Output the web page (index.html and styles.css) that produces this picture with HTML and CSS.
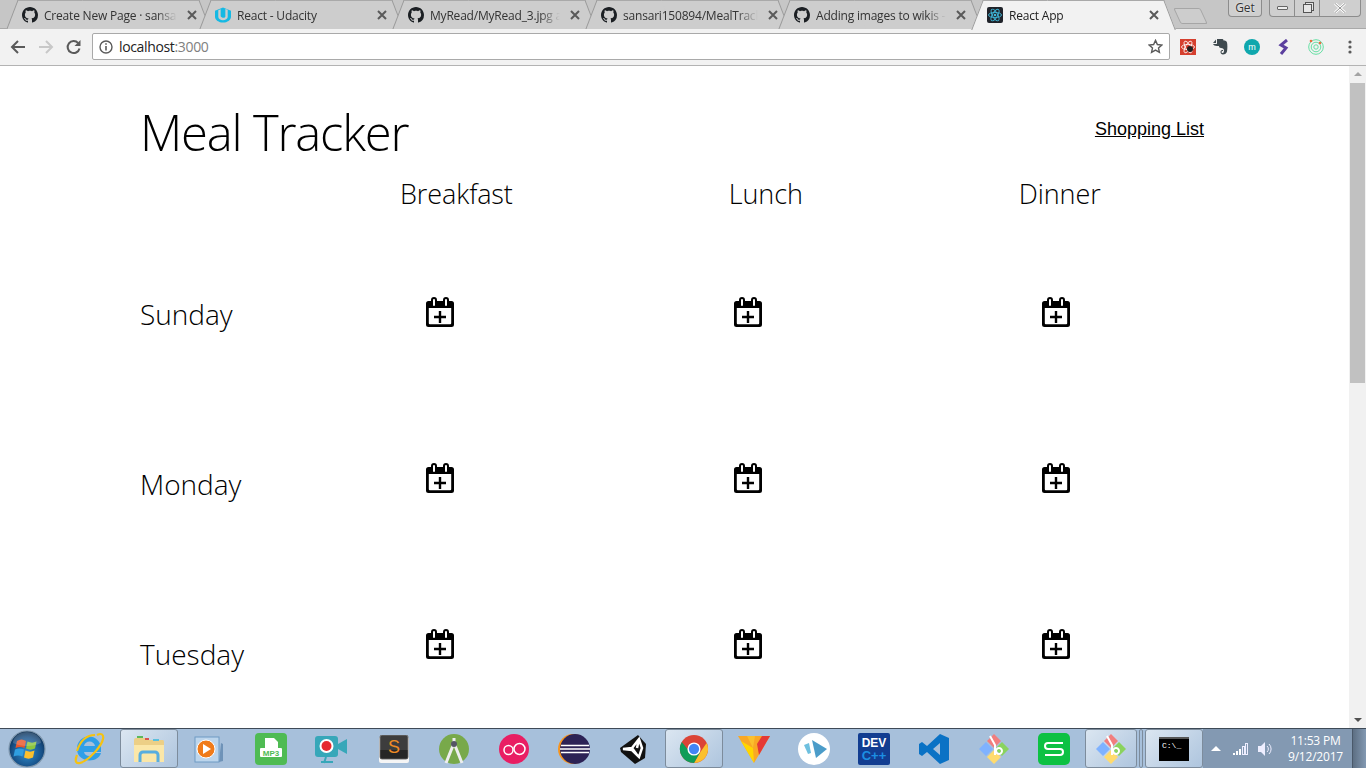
FILE: index.html
```html
<!DOCTYPE html>
<html lang="en">
<head>
    <meta charset="UTF-8">
    <title>React App</title>
    <link rel="stylesheet" href="styles.css">
</head>
<body>
    <svg class="defs" width="0" height="0">
        <defs>
            <radialGradient id="orb" cx="50%" cy="60%" r="60%"><stop offset="0" stop-color="#2f8fd0"/><stop offset=".7" stop-color="#174f86"/><stop offset="1" stop-color="#0c2c4d"/></radialGradient>
        </defs>
        <symbol id="github" viewBox="0 0 16 16"><path fill="#1b1f23" d="M8 0C3.58 0 0 3.58 0 8c0 3.54 2.29 6.53 5.47 7.59.4.07.55-.17.55-.38 0-.19-.01-.82-.01-1.49-2.01.37-2.53-.49-2.69-.94-.09-.23-.48-.94-.82-1.13-.28-.15-.68-.52-.01-.53.63-.01 1.08.58 1.23.82.72 1.21 1.87.87 2.33.66.07-.52.28-.87.51-1.07-1.78-.2-3.64-.89-3.64-3.95 0-.87.31-1.59.82-2.15-.08-.2-.36-1.02.08-2.12 0 0 .67-.21 2.2.82.64-.18 1.32-.27 2-.27.68 0 1.36.09 2 .27 1.53-1.04 2.2-.82 2.2-.82.44 1.1.16 1.92.08 2.12.51.56.82 1.27.82 2.15 0 3.07-1.87 3.75-3.65 3.95.29.25.54.73.54 1.48 0 1.07-.01 1.93-.01 2.2 0 .21.15.46.55.38A8.013 8.013 0 0016 8c0-4.42-3.58-8-8-8z"/></symbol>
        <symbol id="close" viewBox="0 0 10 10"><path d="M1 1l8 8M9 1l-8 8" stroke="#5a5a5a" stroke-width="2" fill="none"/></symbol>
        <symbol id="add-meal" viewBox="0 0 28 30">
            <path fill-rule="evenodd" d="M5 3a3 3 0 0 1 6 0v1h6V3a3 3 0 0 1 6 0v1h2.500A2.500 2.500 0 0 1 28 6.500v21a2.500 2.500 0 0 1-2.500 2.500h-23A2.500 2.500 0 0 1 0 27.500v-21A2.500 2.500 0 0 1 2.500 4H5zM7 3v5a1 1 0 0 0 2 0V3a1 1 0 0 0-2 0zM19 3v5a1 1 0 0 0 2 0V3a1 1 0 0 0-2 0zM2.800 11v15.200a1 1 0 0 0 1 1h20.400a1 1 0 0 0 1-1V11z"/>
            <path d="M12.800 14h2.400v4.800H20v2.400h-4.800V26h-2.400v-4.800H8v-2.400h4.800z"/>
        </symbol>
        <symbol id="git" viewBox="0 0 32 32">
            <path fill="#f17e7e" d="M16 1l7 7-7 7-7-7z"/>
            <path fill="#8ad35e" d="M24 9l7 7-7 7-7-7z"/>
            <path fill="#7fb2ff" d="M8 9l7 7-7 7-7-7z"/>
            <path fill="#ffdb6e" d="M16 17l7 7-7 7-7-7z"/>
            <path fill="none" stroke="#fff" stroke-width="2" d="M12 3l5 9v10M21 15a3 3 0 1 0 .01 0"/>
        </symbol>
    </svg>

    <header class="chrome">
        <div class="tabstrip">
            <div class="tab">
                <svg class="favicon"><use href="#github"/></svg>
                <span class="tab-title">Create New Page · sansar</span>
                <svg class="tab-close"><use href="#close"/></svg>
            </div>
            <div class="tab">
                <svg class="favicon" viewBox="0 0 17 16"><path d="M8.500 0L17 3.500V10c0 3-4 6-8.500 6S0 13 0 10V3.500z" fill="#15b9e4"/><path d="M3.500 3v7c0 2 2.500 3.500 5 3.500s5-1.500 5-3.500V2.500l-2.500-1v8c0 1-1 1.500-2 1.500S6 10 6 9V1.800z" fill="#cdcdcd"/></svg>
                <span class="tab-title">React - Udacity</span>
                <svg class="tab-close"><use href="#close"/></svg>
            </div>
            <div class="tab">
                <svg class="favicon"><use href="#github"/></svg>
                <span class="tab-title">MyRead/MyRead_3.jpg a</span>
                <svg class="tab-close"><use href="#close"/></svg>
            </div>
            <div class="tab">
                <svg class="favicon"><use href="#github"/></svg>
                <span class="tab-title">sansari150894/MealTrack</span>
                <svg class="tab-close"><use href="#close"/></svg>
            </div>
            <div class="tab">
                <svg class="favicon"><use href="#github"/></svg>
                <span class="tab-title">Adding images to wikis -</span>
                <svg class="tab-close"><use href="#close"/></svg>
            </div>
            <div class="tab tab-active">
                <svg class="favicon" viewBox="0 0 16 16">
                    <rect width="16" height="16" rx="2" fill="#20232a"/>
                    <g fill="none" stroke="#3fb7d8" stroke-width=".9"><ellipse cx="8" cy="8" rx="6.500" ry="2.600"/><ellipse cx="8" cy="8" rx="6.500" ry="2.600" transform="rotate(60 8 8)"/><ellipse cx="8" cy="8" rx="6.500" ry="2.600" transform="rotate(120 8 8)"/></g>
                    <circle cx="8" cy="8" r="1.300" fill="#3fb7d8"/>
                </svg>
                <span class="tab-title">React App</span>
                <svg class="tab-close"><use href="#close"/></svg>
            </div>
            <div class="new-tab"></div>
            <div class="window-buttons">
                <div class="get-button">Get</div>
                <div class="window-controls">
                    <span class="win-btn win-min"><i></i></span>
                    <span class="win-btn win-restore"><i></i></span>
                    <span class="win-btn win-close">
                        <svg width="12" height="10" viewBox="0 0 12 10"><path d="M1 .5l10 9M11 .5l-10 9" stroke="#fff" stroke-width="2.600"/><path d="M1 .5l10 9M11 .5l-10 9" stroke="#777" stroke-width=".8"/></svg>
                    </span>
                </div>
            </div>
        </div>

        <div class="toolbar">
            <svg class="tool" width="16" height="14" viewBox="0 0 16 14"><path d="M15 7H2.500M8 1L2 7l6 6" fill="none" stroke="#5a5a5a" stroke-width="2"/></svg>
            <svg class="tool" width="16" height="14" viewBox="0 0 16 14"><path d="M1 7h12.500M8 1l6 6-6 6" fill="none" stroke="#c8c8c8" stroke-width="2"/></svg>
            <svg class="tool" width="16" height="16" viewBox="0 0 16 16"><path d="M13.500 9.500a6 6 0 1 1-1.300-5.400" fill="none" stroke="#5a5a5a" stroke-width="2"/><path d="M14.500 1v6h-6z" fill="#5a5a5a"/></svg>
            <div class="omnibox">
                <svg width="14" height="14" viewBox="0 0 14 14"><circle cx="7" cy="7" r="6" fill="none" stroke="#5a5a5a" stroke-width="1.400"/><path d="M7 6v4.500M7 3.200v1.600" stroke="#5a5a5a" stroke-width="1.600"/></svg>
                <span class="url">localhost<span class="url-port">:3000</span></span>
                <svg class="star" width="15" height="15" viewBox="0 0 16 16"><path d="M8 1.500l2 4.400 4.800.5-3.600 3.200 1 4.700L8 11.900l-4.200 2.400 1-4.700L1.200 6.400 6 5.900z" fill="none" stroke="#5a5a5a" stroke-width="1.500"/></svg>
            </div>
            <div class="extensions">
                <svg width="16" height="16" viewBox="0 0 16 16"><rect width="16" height="16" fill="#d5402f"/><g fill="none" stroke="#fff" stroke-width=".8"><ellipse cx="8" cy="8" rx="6.500" ry="2.600"/><ellipse cx="8" cy="8" rx="6.500" ry="2.600" transform="rotate(60 8 8)"/><ellipse cx="8" cy="8" rx="6.500" ry="2.600" transform="rotate(120 8 8)"/></g><circle cx="10" cy="10" r="3" fill="#222"/></svg>
                <svg width="16" height="16" viewBox="0 0 16 16"><path d="M1 4l3-3.500V4zM5 0h5c1 0 1.500.5 1.500 1.500 2 0 3 .5 3.500 2 .5 2 .5 6 0 9-.5 2-2 3-4 3-1.500 0-2.500-1-2.500-2.500S9.500 11 11 11v1c-1 0-1.500.3-1.500 1s.5 1 1.200 1c1 0 1.300-1 1.300-2.500 0-1.500-1-2.500-3-2.500-1.500 0-2-1-2-2H5C3 7 1.500 6 1 5h3.500c.4 0 .5-.2.500-.5z" fill="#3f4a4f"/></svg>
                <svg width="16" height="16" viewBox="0 0 16 16"><circle cx="8" cy="8" r="8" fill="#0fa7ad"/><text x="8" y="11" font-size="9" text-anchor="middle" fill="#fff" font-family="Liberation Sans">m</text></svg>
                <svg width="16" height="16" viewBox="0 0 16 16"><path d="M11 1L5 6l5 3-5 6" fill="none" stroke="#5b3f9e" stroke-width="3"/></svg>
                <svg width="16" height="16" viewBox="0 0 16 16"><g fill="none" stroke="#66dfa4"><circle cx="8" cy="8" r="7.300"/><circle cx="8" cy="8" r="4.800"/><circle cx="8" cy="8" r="2.200"/></g><circle cx="3" cy="2" r="1.300" fill="#ee6a3f"/><circle cx="12" cy="4" r="1.300" fill="#ee6a3f"/></svg>
                <svg class="menu-dots" width="4" height="14" viewBox="0 0 4 14"><g fill="#5a5a5a"><circle cx="2" cy="2" r="1.600"/><circle cx="2" cy="7" r="1.600"/><circle cx="2" cy="12" r="1.600"/></g></svg>
            </div>
        </div>
    </header>

    <div class="viewport">
        <main class="page">
            <div class="title-row">
                <h1>Meal Tracker</h1>
                <a class="shopping-link" href="#">Shopping List</a>
            </div>
            <div class="meal-names">
                <h2>Breakfast</h2>
                <h2>Lunch</h2>
                <h2>Dinner</h2>
            </div>
            <div class="planner">
                <div class="days">
                    <div class="day">Sunday</div>
                    <div class="day">Monday</div>
                    <div class="day">Tuesday</div>
                </div>
                <div class="slots">
                    <div class="slot-row">
                        <svg class="add-meal"><use href="#add-meal"/></svg>
                        <svg class="add-meal"><use href="#add-meal"/></svg>
                        <svg class="add-meal"><use href="#add-meal"/></svg>
                    </div>
                    <div class="slot-row">
                        <svg class="add-meal"><use href="#add-meal"/></svg>
                        <svg class="add-meal"><use href="#add-meal"/></svg>
                        <svg class="add-meal"><use href="#add-meal"/></svg>
                    </div>
                    <div class="slot-row">
                        <svg class="add-meal"><use href="#add-meal"/></svg>
                        <svg class="add-meal"><use href="#add-meal"/></svg>
                        <svg class="add-meal"><use href="#add-meal"/></svg>
                    </div>
                </div>
            </div>
        </main>
        <div class="scrollbar">
            <span class="arrow arrow-up"></span>
            <div class="thumb"></div>
            <span class="arrow arrow-down"></span>
        </div>
    </div>

    <footer class="taskbar">
        <div class="task-icons">
            <div class="task start">
                <svg width="38" height="38" viewBox="0 0 38 38">
                    <circle cx="19" cy="19" r="18" fill="url(#orb)" stroke="#7f97ad" stroke-width="1.200"/>
                    <path d="M9 11c3-2 6-2 9 0l-1.500 7c-3-1.500-6-1.500-9 0z" fill="#e8562a"/>
                    <path d="M19.500 11.500c3 1.500 6 1.500 9 0l-1.500 7c-3 1.500-6 1.500-9 0z" fill="#8cc63f"/>
                    <path d="M7 19.500c3-1.500 6-1.500 9 0l-1.500 7c-3-1.500-6-1.500-9 0z" fill="#2f9ee0"/>
                    <path d="M17.500 20.500c3 1.500 6 1.500 9 0l-1.500 7c-3 1.500-6 1.500-9 0z" fill="#fbc02d"/>
                    <path d="M5 13a14 11 0 0 1 28 0c-8 4-20 4-28 0z" fill="#fff" opacity=".18"/>
                </svg>
            </div>
            <div class="task ie">
                <svg width="32" height="36" viewBox="0 0 32 36">
                    <path fill-rule="evenodd" d="M4 18a12 12 0 0 1 24-1v4H11c1 5 8 5 11 1h6c-3 11-24 10-24-4zm7-3h11c-1-6-10-6-11 0z" fill="#2f9fe8"/>
                    <path d="M24 4c4-2 7-1 6 4-1 6-13 21-23 24-5 1-5-3-3-8M22 4C13 4 7 11 4 20" fill="none" stroke="#f5c211" stroke-width="2.200"/>
                </svg>
            </div>
            <div class="task task-open explorer">
                <svg width="32" height="30" viewBox="0 0 32 30">
                    <path d="M1 6a2 2 0 0 1 2-2h10l2 2h15a2 2 0 0 1 1 2v20H1z" fill="#eccf86"/>
                    <rect x="4" y="2" width="6" height="2" fill="#5cb85c"/>
                    <rect x="12" y="4" width="4" height="2" fill="#d9534f"/>
                    <rect x="20" y="5" width="6" height="2" fill="#5bc0de"/>
                    <path d="M1 11h30v17H1z" fill="#fbe7a8"/>
                    <path d="M7 28v-7a3 3 0 0 1 3-3h12a3 3 0 0 1 3 3v7" fill="none" stroke="#58aee0" stroke-width="3"/>
                </svg>
            </div>
            <div class="task wmp">
                <svg width="30" height="30" viewBox="0 0 30 30">
                    <path d="M27 9l2 1v17l-4 1z" fill="#6f93b8"/>
                    <rect x="1" y="3" width="24" height="25" fill="#bcd5ec" stroke="#6f9ac4"/>
                    <circle cx="12" cy="15" r="9" fill="#f07b1a" stroke="#fff"/>
                    <path d="M9 10l8 5-8 5z" fill="#fff"/>
                </svg>
            </div>
            <div class="task">
                <svg width="32" height="32" viewBox="0 0 32 32">
                    <rect width="32" height="32" rx="4" fill="#4fbb53"/>
                    <path d="M10 5h9l4 4v6H10z" fill="#fff"/>
                    <rect x="5" y="15" width="22" height="9" rx="1" fill="#fff"/>
                    <text x="16" y="22.500" font-size="8" font-weight="700" text-anchor="middle" fill="#4fbb53" font-family="Liberation Sans">MP3</text>
                </svg>
            </div>
            <div class="task">
                <svg width="32" height="32" viewBox="0 0 32 32">
                    <rect y="3" width="23" height="21" rx="3" fill="#37a7b9"/>
                    <path d="M23 11l9-5v15l-9-5z" fill="#37a7b9"/>
                    <circle cx="11.500" cy="13" r="7" fill="#fff"/>
                    <circle cx="11.500" cy="13" r="5" fill="#e5292f"/>
                    <path d="M11 24l-2 6M6 29h12" stroke="#37a7b9" stroke-width="2" fill="none"/>
                </svg>
            </div>
            <div class="task task-sublime">
                <svg width="30" height="28" viewBox="0 0 30 28">
                    <rect y="2" width="30" height="26" rx="2" fill="#f5f5f5"/>
                    <rect x="1" y="0" width="28" height="24" rx="2" fill="#3d3d3d" stroke="#777"/>
                    <rect x="1.500" y="15" width="27" height="8.500" fill="#262626"/>
                    <text x="15" y="18" font-size="18" text-anchor="middle" fill="#f08b25" font-family="Liberation Sans">S</text>
                </svg>
            </div>
            <div class="task">
                <svg width="32" height="32" viewBox="0 0 32 32">
                    <circle cx="16" cy="16" r="15" fill="#78a94a"/>
                    <path d="M16 5v5M8 30l8-20 8 20" fill="none" stroke="#eee" stroke-width="3"/>
                    <circle cx="16" cy="11" r="3" fill="#556"/>
                </svg>
            </div>
            <div class="task">
                <svg width="32" height="32" viewBox="0 0 32 32">
                    <circle cx="16" cy="16" r="15" fill="#e91e63"/>
                    <circle cx="10.500" cy="17" r="4.500" fill="none" stroke="#fff" stroke-width="1.500"/>
                    <circle cx="21.500" cy="16" r="5.500" fill="none" stroke="#fff" stroke-width="1.500"/>
                </svg>
            </div>
            <div class="task">
                <svg width="32" height="32" viewBox="0 0 32 32">
                    <circle cx="15" cy="16" r="15" fill="#f7941e"/>
                    <circle cx="17" cy="16" r="15" fill="#2c2255"/>
                    <path d="M3 12.500h28M2 16h30M3 19.500h28" stroke="#fff" stroke-width="1.500"/>
                </svg>
            </div>
            <div class="task">
                <svg width="30" height="32" viewBox="0 0 30 32">
                    <path d="M19 2l8 9-1 14-10 6L2 19l-1-4z" fill="#111"/>
                    <path d="M4 16l9-1 7-9 3 9-3 9-7-7zM13 15l5 7M20 6l-2 9" fill="none" stroke="#fff" stroke-width="2.500"/>
                </svg>
            </div>
            <div class="task task-open">
                <svg width="30" height="30" viewBox="0 0 32 32">
                    <circle cx="16" cy="16" r="15" fill="#db4437"/>
                    <path d="M29.500 9.500A15 15 0 0 1 16 31l7-12z" fill="#fbc02d"/>
                    <path d="M3 8.500A15 15 0 0 0 16 31l6.500-11.500L9 16z" fill="#0f9d58"/>
                    <circle cx="16" cy="16" r="7" fill="#fff"/>
                    <circle cx="16" cy="16" r="5.500" fill="#4285f4"/>
                </svg>
            </div>
            <div class="task">
                <svg width="32" height="28" viewBox="0 0 32 28">
                    <path d="M0 1h32L16 28z" fill="#f9a825"/>
                    <path d="M32 1L21 20 19 9l5-8z" fill="#e53935"/>
                    <path d="M3 6l13 22-1-15z" fill="#ffd600"/>
                    <path d="M9 1h8l-2 12z" fill="#fbc02d"/>
                </svg>
            </div>
            <div class="task">
                <svg width="32" height="32" viewBox="0 0 32 32">
                    <circle cx="16" cy="16" r="16" fill="#fff"/>
                    <path d="M14 7l15 9-11 9z" fill="#4b9cc9"/>
                    <path d="M6 12l5-2 2 10-3 1z" fill="#6ec0df"/>
                </svg>
            </div>
            <div class="task">
                <svg width="32" height="32" viewBox="0 0 32 32">
                    <rect width="32" height="32" rx="2" fill="#123d91"/>
                    <text x="16" y="14" font-size="12" font-weight="700" text-anchor="middle" fill="#fff" font-family="Liberation Sans">DEV</text>
                    <text x="16" y="27" font-size="13" font-weight="700" text-anchor="middle" fill="#1c8fe3" font-family="Liberation Sans">C++</text>
                </svg>
            </div>
            <div class="task">
                <svg width="30" height="30" viewBox="0 0 30 30">
                    <path d="M21 0l9 4v22l-9 4L8 18l-5 4-3-2V10l3-2 5 4zM21 9l-7 6 7 6z" fill="#0a72c5"/>
                </svg>
            </div>
            <div class="task"><svg width="32" height="32"><use href="#git"/></svg></div>
            <div class="task">
                <svg width="32" height="32" viewBox="0 0 32 32">
                    <rect width="32" height="32" rx="5" fill="#0dc143"/>
                    <path d="M25 10H10a3 3 0 0 0 0 6h12a3 3 0 0 1 0 6H7" fill="none" stroke="#fff" stroke-width="2"/>
                </svg>
            </div>
            <div class="task task-open task-git"><svg width="32" height="32"><use href="#git"/></svg></div>
            <div class="task-sep"></div>
            <div class="task task-open task-cmd">
                <div class="cmd-window">C:\_</div>
            </div>
        </div>
        <div class="tray">
            <span class="tray-arrow"></span>
            <svg width="16" height="12" viewBox="0 0 16 12"><g fill="#fff"><rect x="0" y="10" width="2" height="2"/><rect x="3" y="8" width="2" height="4"/><rect x="6" y="6" width="2" height="6"/></g><g fill="none" stroke="#eef"><rect x="9.500" y="3.500" width="2" height="8"/><rect x="12.500" y=".5" width="2" height="11"/></g></svg>
            <svg class="tray-volume" width="16" height="14" viewBox="0 0 16 14"><path d="M1 4h3l4-4v14l-4-4H1z" fill="#eef"/><path d="M10 4a4 4 0 0 1 0 6M12 2a7 7 0 0 1 0 10" fill="none" stroke="#eef"/></svg>
            <div class="clock">
                <div>11:53 PM</div>
                <div>9/12/2017</div>
            </div>
            <div class="show-desktop"></div>
        </div>
    </footer>
</body>
</html>
```

FILE: styles.css
```css
* {
    box-sizing: border-box;
}

html, body {
    height: 100%;
}

body {
    margin: 0;
    display: flex;
    flex-direction: column;
    overflow: hidden;
    background-color: #fff;
    font-family: "Open Sans", "Liberation Sans", sans-serif;
    color: #000;
}

.defs {
    position: absolute;
}

/* browser frame */
.chrome {
    flex: none;
    height: 66px;
}

.tabstrip {
    height: 29px;
    display: flex;
    padding-left: 3px;
    background-color: #c6c6c6;
    border-bottom: 1px solid #a9a9a9;
}

.tab {
    position: relative;
    width: 193px;
    height: 29px;
    flex: none;
    display: flex;
    align-items: center;
    padding: 1px 2px 0 19px;
    font-size: 12px;
    letter-spacing: -0.2px;
    color: #333;
}

.tab::before,
.tab::after {
    content: "";
    position: absolute;
    top: 0;
    bottom: 0;
    width: 60%;
    background-color: #cdcdcd;
    border-top: 1px solid #a9a9a9;
    z-index: 0;
}

.tab::before {
    left: 9px;
    border-left: 1px solid #999;
    transform: skewX(-21deg);
}

.tab::after {
    right: -9px;
    border-right: 1px solid #999;
    transform: skewX(21deg);
}

.tab-active {
    height: 30px;
    padding-top: 0;
    z-index: 2;
    color: #222;
}

.tab-active::before,
.tab-active::after {
    background-color: #f2f2f2;
}

.favicon,
.tab-title,
.tab-close {
    position: relative;
    z-index: 1;
}

.favicon {
    flex: none;
    width: 16px;
    height: 16px;
    margin-right: 6px;
}

.tab-title {
    flex: 1;
    white-space: nowrap;
    -webkit-mask-image: linear-gradient(to right, #000 82%, transparent 97%);
    mask-image: linear-gradient(to right, #000 82%, transparent 97%);
}

.tab-close {
    flex: none;
    width: 10px;
    height: 10px;
    margin-left: 6px;
}

.new-tab {
    width: 27px;
    height: 16px;
    margin: 8px 0 0 16px;
    background-color: #cdcdcd;
    border: 1px solid #a6a6a6;
    border-radius: 2px;
    transform: skewX(25deg);
}

.window-buttons {
    margin-left: auto;
    display: flex;
    align-items: flex-start;
    gap: 7px;
    padding-right: 5px;
}

.get-button,
.window-controls {
    height: 17px;
    background-color: #cfcfcf;
    border: 1px solid #8c8c8c;
    border-top: none;
    border-radius: 0 0 4px 4px;
}

.get-button {
    width: 34px;
    font-size: 12px;
    line-height: 15px;
    text-align: center;
    color: #333;
    text-shadow: 0 0 2px #fff;
}

.window-controls {
    display: flex;
}

.win-btn {
    display: flex;
    align-items: center;
    justify-content: center;
    border-left: 1px solid #8c8c8c;
}

.win-btn:first-child {
    border-left: none;
}

.win-min {
    width: 24px;
}

.win-min i {
    width: 11px;
    height: 4px;
    background-color: #eee;
    border: 1px solid #666;
    border-radius: 1px;
}

.win-restore {
    width: 25px;
}

.win-restore i {
    width: 9px;
    height: 9px;
    background-color: #e6e6e6;
    border: 1px solid #555;
    box-shadow: 2px -2px 0 -1px #e6e6e6, 2px -2px 0 0 #555;
}

.win-close {
    width: 41px;
}

.toolbar {
    height: 37px;
    display: flex;
    align-items: center;
    padding: 0 0 1px 10px;
    background-color: #f2f2f2;
    border-bottom: 1px solid #b3b3b3;
}

.tool {
    flex: none;
    margin-right: 12px;
}

.omnibox {
    width: 1078px;
    height: 27px;
    margin-left: -2px;
    display: flex;
    align-items: center;
    gap: 6px;
    padding: 0 6px;
    background-color: #fff;
    border: 1px solid #a9a9a9;
    border-radius: 2px;
    font-size: 14px;
    letter-spacing: -0.35px;
    color: #222;
}

.url-port {
    color: #808080;
}

.star {
    margin-left: auto;
}

.extensions {
    flex: 1;
    display: flex;
    align-items: center;
    gap: 16px;
    padding-left: 10px;
}

.menu-dots {
    margin-left: 8px;
}

/* page */
.viewport {
    flex: 1;
    min-height: 0;
    display: flex;
    overflow: hidden;
}

.page {
    flex: 1;
    padding: 0 145px 0 140px;
    font-weight: 300;
}

.title-row {
    height: 108px;
    display: flex;
    justify-content: space-between;
}

h1 {
    margin: 31px 0 0;
    font-size: 49px;
    line-height: 70px;
    font-weight: 300;
    letter-spacing: -1.2px;
}

.shopping-link {
    margin-top: 52px;
    height: 22px;
    font-family: "Liberation Sans", Arial, sans-serif;
    font-size: 18px;
    line-height: 22px;
    font-weight: 400;
    color: #000;
}

.meal-names {
    display: flex;
    gap: 216px;
    padding-left: 260px;
}

h2 {
    margin: 0;
    font-size: 27px;
    line-height: 40px;
    font-weight: 300;
    letter-spacing: -0.1px;
}

.planner {
    display: flex;
}

.days {
    width: 286px;
    flex: none;
    padding-top: 80px;
}

.day {
    height: 170px;
    font-size: 28px;
    line-height: 40px;
}

.slots {
    padding-top: 83px;
}

.slot-row {
    height: 166px;
    display: flex;
    gap: 280px;
}

.add-meal {
    width: 28px;
    height: 30px;
}

.scrollbar {
    width: 17px;
    flex: none;
    display: flex;
    flex-direction: column;
    align-items: center;
    background-color: #f1f1f1;
}

.arrow {
    flex: none;
    height: 17px;
    width: 0;
    border-left: 4px solid transparent;
    border-right: 4px solid transparent;
    margin-top: 6px;
}

.arrow-up {
    height: 0;
    border-bottom: 4px solid #a3a3a3;
    margin-bottom: 7px;
}

.arrow-down {
    height: 0;
    margin-top: auto;
    margin-bottom: 6px;
    border-top: 4px solid #505050;
}

.thumb {
    width: 15px;
    height: 300px;
    background-color: #c1c1c1;
}

/* windows taskbar */
.taskbar {
    flex: none;
    height: 40px;
    display: flex;
    background-color: #a7c0db;
    border-top: 1px solid #3e4a57;
}

.task-icons {
    flex: 1;
    display: flex;
    align-items: center;
}

.task {
    width: 60px;
    height: 39px;
    flex: none;
    display: flex;
    align-items: center;
    justify-content: center;
}

.start {
    width: 59px;
    padding-right: 6px;
}

.wmp {
    margin-right: 2px;
}

.task-sublime {
    margin-left: 3px;
}

.task-open {
    width: 58px;
    margin: 0 1px;
    background: linear-gradient(135deg, #dbe6f1, #aec5de);
    border: 1px solid #7d8c9c;
    border-radius: 3px;
}

.task-git {
    width: 52px;
    margin: 0 0 0 1px;
}

.task-sep {
    width: 4px;
    height: 39px;
    margin: 0 2px;
    border: 1px solid #7d8c9c;
    border-radius: 2px;
}

.task-cmd {
    margin: 0;
}

.cmd-window {
    width: 30px;
    height: 24px;
    padding: 3px 0 0 3px;
    background-color: #000;
    border-top: 2px solid #555;
    font-family: "Liberation Mono", monospace;
    font-size: 8px;
    line-height: 8px;
    color: #fff;
}

.tray {
    width: 163px;
    flex: none;
    display: flex;
    align-items: center;
    gap: 12px;
    padding-left: 8px;
    background-color: #8399b2;
}

.tray-volume {
    margin-left: -4px;
}

.tray-arrow {
    width: 0;
    height: 0;
    border-left: 5px solid transparent;
    border-right: 5px solid transparent;
    border-bottom: 5px solid #fff;
}

.clock {
    flex: 1;
    margin-left: -2px;
    font-size: 12px;
    line-height: 16px;
    letter-spacing: -0.2px;
    text-align: center;
    color: #fff;
}

.show-desktop {
    width: 14px;
    margin-left: -8px;
    align-self: stretch;
    background: linear-gradient(to right, #5d6f83, #8399b2);
    border-left: 1px solid #4a596a;
}
```
